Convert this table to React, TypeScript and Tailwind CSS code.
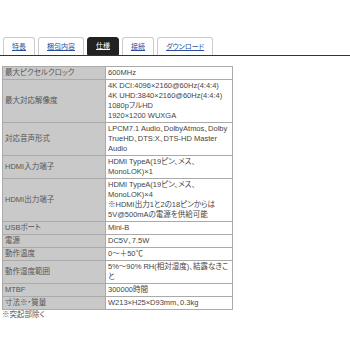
const tabs = ["特長", "梱包内容", "仕様", "接続", "ダウンロード"];

const specs: { label: string; lines: string[] }[] = [
  { label: "最大ピクセルクロック", lines: ["600MHz"] },
  {
    label: "最大対応解像度",
    lines: [
      "4K DCI:4096×2160@60Hz(4:4:4)",
      "4K UHD:3840×2160@60Hz(4:4:4)",
      "1080pフルHD",
      "1920×1200 WUXGA",
    ],
  },
  {
    label: "対応音声形式",
    lines: ["LPCM7.1 Audio、DolbyAtmos、Dolby TrueHD、DTS:X、DTS-HD Master Audio"],
  },
  { label: "HDMI入力端子", lines: ["HDMI TypeA(19ピン、メス、MonoLOK)×1"] },
  {
    label: "HDMI出力端子",
    lines: [
      "HDMI TypeA(19ピン、メス、MonoLOK)×4",
      "※HDMI出力1と2の18ピンからは5V@500mAの電源を供給可能",
    ],
  },
  { label: "USBポート", lines: ["Mini-B"] },
  { label: "電源", lines: ["DC5V、7.5W"] },
  { label: "動作温度", lines: ["0～＋50℃"] },
  { label: "動作湿度範囲", lines: ["5%～90% RH(相対湿度)、結露なきこ", "と"] },
  { label: "MTBF", lines: ["300000時間"] },
  { label: "寸法※・質量", lines: ["W213×H25×D93mm、0.3kg"] },
];

export default function App() {
  return (
    <div
      className="w-[350px] h-[350px] bg-white overflow-hidden [font-feature-settings:'palt']"
      style={{ fontFamily: '"Liberation Sans", "Noto Sans CJK JP", sans-serif' }}
    >
      <div className="pt-[37px] border-b border-[#333] flex gap-[3px] pl-[3px]">
        {tabs.map((t) =>
          t === "仕様" ? (
            <div
              key={t}
              className="h-[18px] px-[8px] rounded-t-[3px] bg-[#222] border border-[#222] text-white text-[7px] leading-[16px] underline"
            >
              {t}
            </div>
          ) : (
            <div
              key={t}
              className="h-[18px] px-[8px] rounded-t-[3px] bg-white border border-b-0 border-[#ccc] text-[#2a4f9c] text-[7px] leading-[17px] underline"
            >
              {t}
            </div>
          )
        )}
      </div>
      <div className="pt-[10px] pl-[2px]">
        <table className="w-[231px] border-collapse text-[7.5px] leading-[10px] text-[#444]">
          <tbody>
            {specs.map((s) => (
              <tr key={s.label}>
                <td className="w-[103px] bg-[#c9c9c9] border border-[#aaa] px-[2px] py-[1px] align-middle text-[#555]">
                  {s.label}
                </td>
                <td className="border border-[#aaa] px-[2px] py-[1px] align-top">
                  {s.lines.map((l) => (
                    <div key={l}>{l}</div>
                  ))}
                </td>
              </tr>
            ))}
          </tbody>
        </table>
        <div className="text-[7.5px] leading-[10px] text-[#555]">※突起部除く</div>
      </div>
    </div>
  );
}
